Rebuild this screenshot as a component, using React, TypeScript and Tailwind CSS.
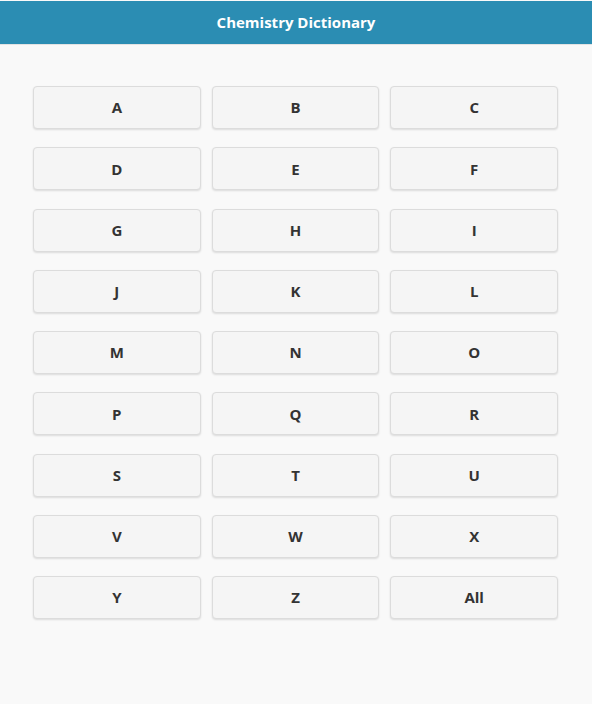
const letters = [
  "A", "B", "C", "D", "E", "F", "G", "H", "I", "J", "K", "L", "M",
  "N", "O", "P", "Q", "R", "S", "T", "U", "V", "W", "X", "Y", "Z", "All",
];

export default function App() {
  return (
    <div
      className="min-h-[704px] bg-[#f9f9f9] pt-px"
      style={{ fontFamily: '"Open Sans", "Noto Sans", sans-serif' }}
    >
      {/* Header */}
      <header className="h-[44px] bg-[#2b8db3] flex items-center justify-center border-b border-[#e3e3e3]">
        <h1 className="text-white text-[15px] font-bold">Chemistry Dictionary</h1>
      </header>

      {/* Letter grid */}
      <div className="pl-[33px] pt-[41px]">
        <div className="grid w-[525px] grid-cols-3 gap-x-[11px] gap-y-[18.25px]">
          {letters.map(l => (
            <button
              key={l}
              type="button"
              className="h-[43px] rounded-[4px] border border-[#dcdcdc] bg-[#f5f5f5] shadow-[0_1px_2px_rgba(0,0,0,0.12)] text-[15px] font-bold text-[#333]"
            >
              {l}
            </button>
          ))}
        </div>
      </div>
    </div>
  );
}
